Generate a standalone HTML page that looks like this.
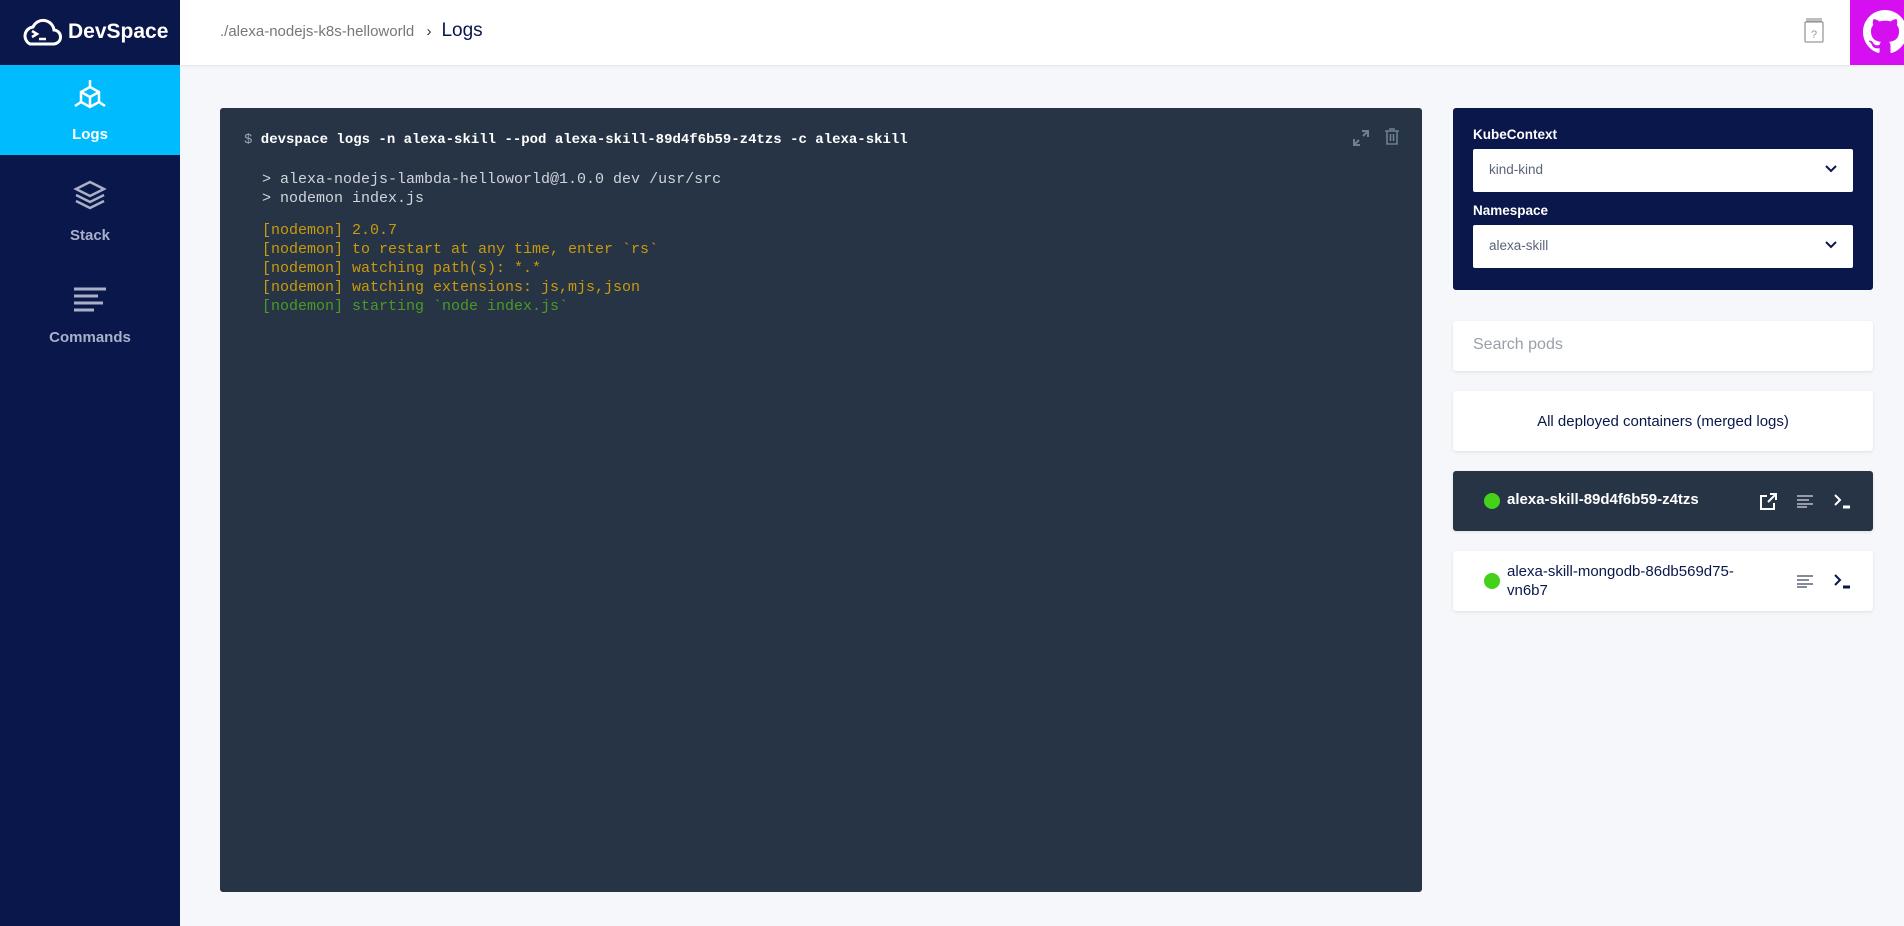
<!DOCTYPE html>
<html><head><meta charset="utf-8"><style>
*{margin:0;padding:0;box-sizing:border-box}
body{width:1904px;height:926px;overflow:hidden;background:#f5f7fb;font-family:"Liberation Sans",sans-serif;position:relative}
.side{position:absolute;left:0;top:0;width:180px;height:926px;background:#0a174b}
.logo{position:absolute;left:20px;top:17px;color:#fff;font-weight:bold;font-size:21px;display:flex;align-items:center;gap:6px}
.nav{position:absolute;left:0;width:180px;height:90px;text-align:center;color:#a9b0c8;font-size:15px;font-weight:bold}
.nav svg{display:block;margin:14px auto 13px}
.nav.act{background:#00bcff;color:#fff}
.hdr{position:absolute;left:180px;top:0;right:0;height:65px;background:#fff;box-shadow:0 1px 3px rgba(0,0,0,.08)}
.crumb{position:absolute;left:40px;top:20px;font-size:15px;color:#777}
.crumb b{font-weight:normal;color:#0a174b;font-size:19px;margin-left:10px}
.gh{position:absolute;right:0;top:0;width:54px;height:65px;background:#d50ff0;overflow:hidden}
.term{position:absolute;left:220px;top:108px;width:1202px;height:784px;background:#263445;border-radius:3px;font-family:"Liberation Mono",monospace;font-size:15px}
.cmd{position:absolute;left:24px;top:24px;color:#fff;font-weight:bold;font-size:14px}
.cmd span{color:#9aa5b4;font-weight:normal}
.out{position:absolute;left:42px;top:62px;line-height:19px;white-space:pre}
.w{color:#d0d5dc;display:block;margin-bottom:13px}.y{color:#c99a0c}.g{color:#4c9a25}
.ctx{position:absolute;left:1453px;top:108px;width:420px;height:182px;background:#0a174b;border-radius:3px}
.lbl{position:absolute;left:20px;color:#fff;font-weight:bold;font-size:13.5px}
.sel{position:absolute;left:20px;width:380px;height:43px;background:#fff;border-radius:2px;color:#5a6478;font-size:13.5px;padding:13px 0 0 16px}
.sel svg{position:absolute;right:16px;top:16px}
.card{position:absolute;left:1453px;width:420px;background:#fff;border-radius:3px;box-shadow:0 1px 3px rgba(0,0,0,.1)}
.dot{position:absolute;left:31px;width:16px;height:16px;border-radius:50%;background:#43d11a}
</style></head><body>
<div class="side">
  <div class="logo"><svg width="42" height="30" viewBox="0 0 42 30"><path d="M10 27 H33 a7 7 0 0 0 1-14 a11 11 0 0 0-21-3 a9 9 0 0 0-3 17z" fill="none" stroke="#fff" stroke-width="3"/><path d="M12 14 l5 3 -5 3" fill="none" stroke="#fff" stroke-width="2.5"/><path d="M19 22 h7" stroke="#fff" stroke-width="2.5"/></svg>DevSpace</div>
  <div class="nav act" style="top:65px"><svg width="34" height="34" viewBox="0 0 34 34" fill="none" stroke="#fff" stroke-width="2.5"><path d="M17 1v7M8 13l9-5 9 5v10l-9 5-9-5zM8 13l9 5 9-5M17 18v10M8 23l-6 4M26 23l6 4"/></svg>Logs</div>
  <div class="nav" style="top:166px"><svg width="34" height="34" viewBox="0 0 34 34" fill="none" stroke="#a9b0c8" stroke-width="2.5"><path d="M17 2l14 7-14 7-14-7z"/><path d="M3 15l14 7 14-7"/><path d="M3 21l14 7 14-7"/></svg>Stack</div>
  <div class="nav" style="top:268px"><svg width="34" height="34" viewBox="0 0 34 34" stroke="#a9b0c8" stroke-width="3"><path d="M1 7h32M1 14h24M1 21h29M1 28h20"/></svg>Commands</div>
</div>
<div class="hdr">
  <div class="crumb">./alexa-nodejs-k8s-helloworld <span style="color:#333;margin-left:8px">›</span><b>Logs</b></div>
  <svg style="position:absolute;left:1624px;top:18px" width="20" height="25" viewBox="0 0 20 25" fill="none" stroke="#999" stroke-width="1.3"><rect x="1" y="4" width="18" height="20" rx="1"/><path d="M2 1h16M2 3h16"/><text x="7" y="20" font-size="11" fill="#999" stroke="none" font-family="Liberation Sans">?</text></svg>
  <div class="gh"><svg style="position:absolute;left:13px;top:10px" width="44" height="44" viewBox="0 0 16 16"><path fill="#fff" d="M8 0C3.58 0 0 3.58 0 8c0 3.54 2.29 6.530 5.47 7.59.4.07.55-.17.55-.38v-1.33c-2.230.48-2.7-1.07-2.7-1.07-.36-.92-.89-1.170-.89-1.17-.73-.5.06-.49.06-.49.8.06 1.23.83 1.23.83.71 1.22 1.87.87 2.33.66.07-.52.28-.87.51-1.07-1.78-.2-3.65-.89-3.65-3.95 0-.87.31-1.59.82-2.15-.08-.2-.36-1.02.08-2.12 0 0 .67-.21 2.2.82.64-.18 1.32-.27 2-.27.68 0 1.36.09 2 .27 1.530-1.04 2.2-.82 2.2-.82.44 1.1.16 1.92.08 2.12.51.56.82 1.27.82 2.15 0 3.07-1.87 3.75-3.65 3.95.29.25.54.73.54 1.48v2.2c0 .21.15.46.55.38A8.013 8.013 0 0016 8c0-4.42-3.58-8-8-8z"/></svg></div>
</div>
<div class="term">
  <div class="cmd"><span>$</span> devspace logs -n alexa-skill --pod alexa-skill-89d4f6b59-z4tzs -c alexa-skill</div>
  <svg style="position:absolute;left:1133px;top:22px" width="16" height="16" viewBox="0 0 16 16" stroke="#6f7f94" stroke-width="2" fill="none"><path d="M9 1h6v6M15 1l-5 5M7 15H1V9M1 15l5-5"/></svg>
  <svg style="position:absolute;left:1165px;top:20px" width="14" height="17" viewBox="0 0 14 17" stroke="#6f7f94" stroke-width="1.6" fill="none"><path d="M0 3h14M5 3V1h4v2M2 3v13h10V3M5.5 6v7M8.5 6v7"/></svg>
  <div class="out"><span class="w">&gt; alexa-nodejs-lambda-helloworld@1.0.0 dev /usr/src
&gt; nodemon index.js</span><span class="y">[nodemon] 2.0.7
[nodemon] to restart at any time, enter `rs`
[nodemon] watching path(s): *.*
[nodemon] watching extensions: js,mjs,json</span>
<span class="g">[nodemon] starting `node index.js`</span></div>
</div>
<div class="ctx">
  <div class="lbl" style="top:19px">KubeContext</div>
  <div class="sel" style="top:41px">kind-kind<svg width="12" height="8" viewBox="0 0 12 8"><path d="M1 1l5 5 5-5" stroke="#0a174b" stroke-width="2" fill="none"/></svg></div>
  <div class="lbl" style="top:95px">Namespace</div>
  <div class="sel" style="top:117px">alexa-skill<svg width="12" height="8" viewBox="0 0 12 8"><path d="M1 1l5 5 5-5" stroke="#0a174b" stroke-width="2" fill="none"/></svg></div>
</div>
<div class="card" style="top:321px;height:50px;color:#9aa0aa;font-size:16px;padding:15px 0 0 20px">Search pods</div>
<div class="card" style="top:391px;height:60px;color:#0a174b;font-size:15px;text-align:center;padding-top:22px">All deployed containers (merged logs)</div>
<div class="card" style="top:471px;height:60px;background:#263445">
  <div class="dot" style="top:22px"></div>
  <div style="position:absolute;left:54px;top:20px;color:#fff;font-weight:bold;font-size:15px">alexa-skill-89d4f6b59-z4tzs</div>
  <svg style="position:absolute;left:307px;top:22px" width="17" height="17" viewBox="0 0 17 17" stroke="#fff" stroke-width="2" fill="none"><path d="M7 3H1v13h13v-6M10 1h6v6M16 1l-8 8"/></svg>
  <svg style="position:absolute;left:344px;top:24px" width="16" height="13" stroke="#bbc" stroke-width="1.5"><path d="M0 1h16M0 5h12M0 9h16M0 12h10"/></svg>
  <svg style="position:absolute;left:381px;top:22px" width="17" height="16" fill="none" stroke="#fff" stroke-width="2"><path d="M1 2l5 5-5 5"/><path d="M9 14h7" stroke-width="3"/></svg>
</div>
<div class="card" style="top:551px;height:60px">
  <div class="dot" style="top:22px"></div>
  <div style="position:absolute;left:54px;top:11px;color:#0a174b;font-size:15px;line-height:19px">alexa-skill-mongodb-86db569d75-<br>vn6b7</div>
  <svg style="position:absolute;left:344px;top:24px" width="16" height="13" stroke="#5a6478" stroke-width="1.5"><path d="M0 1h16M0 5h12M0 9h16M0 12h10"/></svg>
  <svg style="position:absolute;left:381px;top:22px" width="17" height="16" fill="none" stroke="#0a174b" stroke-width="2"><path d="M1 2l5 5-5 5"/><path d="M9 14h7" stroke-width="3"/></svg>
</div>
</body></html>
